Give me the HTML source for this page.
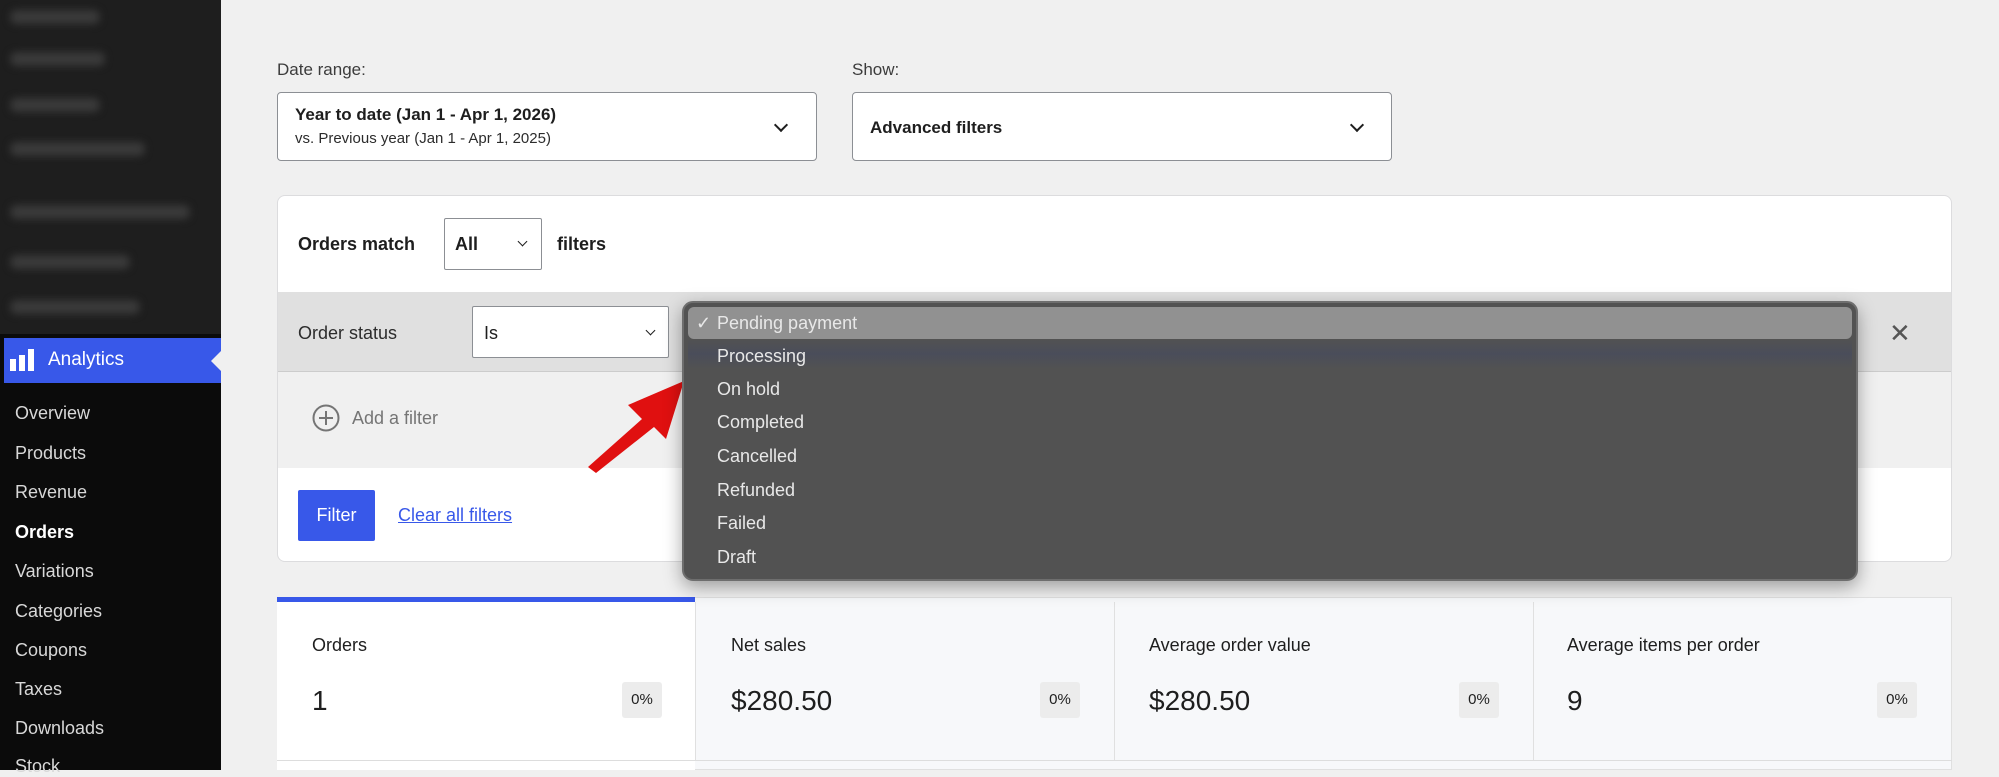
<!DOCTYPE html>
<html><head><style>
*{box-sizing:border-box;margin:0;padding:0}
body{width:1999px;height:770px;overflow:hidden;background:#f0f0f0;font-family:"Liberation Sans",sans-serif;position:relative;color:#1e1e1e}
.a{position:absolute}
.side{left:0;top:0;width:221px;height:770px;background:#0b0b0b}
.blur{left:0;top:0;width:221px;height:334px;background:#1e1e1e}
.bl{position:absolute;height:14px;background:#3a3a3a;border-radius:7px;filter:blur(4px)}
.menu{left:15px;font-size:18px;color:#d8d8d8}
.box{background:#fff;border:1px solid #8c8f94;border-radius:4px}
.chev{position:absolute;width:10px;height:10px;border-right:2px solid #1e1e1e;border-bottom:2px solid #1e1e1e;transform:rotate(45deg)}
.chs{position:absolute;width:7px;height:7px;border-right:1.5px solid #1e1e1e;border-bottom:1.5px solid #1e1e1e;transform:rotate(45deg)}
.it{position:absolute;left:33px;font-size:18px;color:#e8e8e8}
.lab{font-size:18px;color:#1e1e1e}
.val{font-size:28px;color:#1e1e1e}
.bd{width:40px;height:36px;background:#ececec;border-radius:3px;font-size:15px;text-align:center;line-height:36px;color:#1e1e1e}
</style></head><body>
<div class="a side"></div>
<div class="a blur">
<div class="bl" style="left:10px;top:10px;width:90px"></div>
<div class="bl" style="left:10px;top:52px;width:95px"></div>
<div class="bl" style="left:10px;top:98px;width:90px"></div>
<div class="bl" style="left:10px;top:142px;width:135px"></div>
<div class="bl" style="left:10px;top:205px;width:180px"></div>
<div class="bl" style="left:10px;top:255px;width:120px"></div>
<div class="bl" style="left:10px;top:300px;width:130px"></div>
</div>
<div class="a" style="left:4px;top:338px;width:217px;height:45px;background:#3858e9"></div>
<div class="a" style="left:211px;top:350px;width:0;height:0;border-top:11px solid transparent;border-bottom:11px solid transparent;border-right:11px solid #f0f0f0"></div>
<svg class="a" style="left:10px;top:349px" width="24" height="22"><rect x="0" y="10" width="6" height="12" fill="#fff"/><rect x="9" y="6" width="6" height="16" fill="#fff"/><rect x="18" y="0" width="6" height="22" fill="#fff"/></svg>
<div class="a" style="left:48px;top:349px;font-size:19px;color:#fff">Analytics</div>
<div class="a menu" style="top:403px">Overview</div>
<div class="a menu" style="top:443px">Products</div>
<div class="a menu" style="top:482px">Revenue</div>
<div class="a menu" style="top:522px;color:#fff;font-weight:bold">Orders</div>
<div class="a menu" style="top:561px">Variations</div>
<div class="a menu" style="top:601px">Categories</div>
<div class="a menu" style="top:640px">Coupons</div>
<div class="a menu" style="top:679px">Taxes</div>
<div class="a menu" style="top:718px">Downloads</div>
<div class="a menu" style="top:756px">Stock</div>

<div class="a" style="left:277px;top:60px;font-size:17px;color:#3c3c3c">Date range:</div>
<div class="a box" style="left:277px;top:92px;width:540px;height:69px"></div>
<div class="a" style="left:295px;top:105px;font-size:17px;font-weight:bold">Year to date (Jan 1 - Apr 1, 2026)</div>
<div class="a" style="left:295px;top:130px;font-size:15px;color:#2c2c2c">vs. Previous year (Jan 1 - Apr 1, 2025)</div>
<div class="chev" style="left:776px;top:120px"></div>
<div class="a" style="left:852px;top:60px;font-size:17px;color:#3c3c3c">Show:</div>
<div class="a box" style="left:852px;top:92px;width:540px;height:69px"></div>
<div class="a" style="left:870px;top:118px;font-size:17px;font-weight:bold">Advanced filters</div>
<div class="chev" style="left:1352px;top:120px"></div>

<div class="a" style="left:277px;top:195px;width:1675px;height:367px;background:#fff;border:1px solid #dcdcde;border-radius:8px;overflow:hidden">
 <div class="a" style="left:0;top:96px;width:100%;height:80px;background:#e0e0e0;border-bottom:1px solid #ccc"></div>
 <div class="a" style="left:0;top:176px;width:100%;height:96px;background:#f0f0f0"></div>
</div>
<div class="a" style="left:298px;top:234px;font-size:18px;font-weight:bold">Orders match</div>
<div class="a box" style="left:444px;top:218px;width:98px;height:52px;border-radius:2px"></div>
<div class="a" style="left:455px;top:234px;font-size:18px;font-weight:bold">All</div>
<div class="chs" style="left:519px;top:238px"></div>
<div class="a" style="left:557px;top:234px;font-size:18px;font-weight:bold">filters</div>
<div class="a" style="left:298px;top:323px;font-size:18px;color:#2c2c2c">Order status</div>
<div class="a box" style="left:472px;top:306px;width:197px;height:52px;border-radius:2px"></div>
<div class="a" style="left:484px;top:323px;font-size:18px">Is</div>
<div class="chs" style="left:647px;top:327px"></div>
<div class="a" style="left:1889px;top:318px;font-size:26px;color:#555">✕</div>
<svg class="a" style="left:312px;top:404px" width="28" height="28"><circle cx="14" cy="14" r="12.5" fill="none" stroke="#757575" stroke-width="2"/><path d="M14 7v14M7 14h14" stroke="#757575" stroke-width="2"/></svg>
<div class="a" style="left:352px;top:408px;font-size:18px;color:#757575">Add a filter</div>
<div class="a" style="left:298px;top:490px;width:77px;height:51px;background:#3858e9;border-radius:2px;color:#fff;font-size:18px;text-align:center;line-height:51px">Filter</div>
<div class="a" style="left:398px;top:505px;font-size:18px;color:#3858e9;text-decoration:underline">Clear all filters</div>

<div class="a" style="left:277px;top:597px;width:1675px;height:173px;background:#f7f8fa;border:1px solid #e0e0e0"></div>
<div class="a" style="left:277px;top:597px;width:418px;height:173px;background:#fff"></div>
<div class="a" style="left:277px;top:597px;width:418px;height:5px;background:#3858e9"></div>
<div class="a" style="left:695px;top:602px;width:1px;height:158px;background:#e0e0e0"></div>
<div class="a" style="left:1114px;top:602px;width:1px;height:158px;background:#e0e0e0"></div>
<div class="a" style="left:1533px;top:602px;width:1px;height:158px;background:#e0e0e0"></div>
<div class="a" style="left:277px;top:760px;width:1675px;height:1px;background:#ddd"></div>
<div class="a lab" style="left:312px;top:635px">Orders</div>
<div class="a lab" style="left:731px;top:635px">Net sales</div>
<div class="a lab" style="left:1149px;top:635px">Average order value</div>
<div class="a lab" style="left:1567px;top:635px">Average items per order</div>
<div class="a val" style="left:312px;top:685px">1</div>
<div class="a val" style="left:731px;top:685px">$280.50</div>
<div class="a val" style="left:1149px;top:685px">$280.50</div>
<div class="a val" style="left:1567px;top:685px">9</div>
<div class="a bd" style="left:622px;top:682px">0%</div>
<div class="a bd" style="left:1040px;top:682px">0%</div>
<div class="a bd" style="left:1459px;top:682px">0%</div>
<div class="a bd" style="left:1877px;top:682px">0%</div>

<svg class="a" style="left:580px;top:375px" width="110" height="100"><path d="M8 92 L62 44 L48 30 L104 6 L86 64 L74 52 L16 98 Z" fill="#e01010"/></svg>

<div class="a" style="left:682px;top:301px;width:1176px;height:280px;background:#525252;border:2px solid #6e6e6e;border-radius:11px;box-shadow:0 6px 18px rgba(0,0,0,.35)">
 <div class="a" style="left:4px;top:4px;width:1164px;height:32px;background:#919191;border-radius:6px"></div>
 <div class="a" style="left:4px;top:36px;width:1164px;height:30px;background:linear-gradient(#525252,#4a4d5a,#525252)"></div>
 <div class="it" style="left:12px;top:10px">✓</div>
 <div class="it" style="top:10px">Pending payment</div>
 <div class="it" style="top:43px">Processing</div>
 <div class="it" style="top:76px">On hold</div>
 <div class="it" style="top:109px">Completed</div>
 <div class="it" style="top:143px">Cancelled</div>
 <div class="it" style="top:177px">Refunded</div>
 <div class="it" style="top:210px">Failed</div>
 <div class="it" style="top:244px">Draft</div>
</div>
</body></html>
